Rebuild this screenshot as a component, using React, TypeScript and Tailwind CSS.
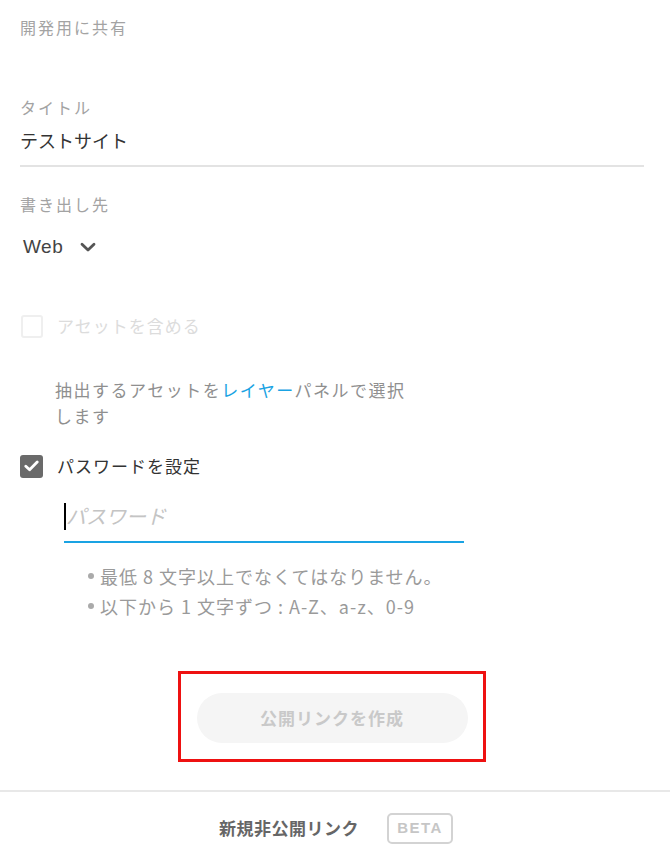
import React from "react";

const font = "font-['Hiragino_Sans','Noto_Sans_CJK_JP','Liberation_Sans',sans-serif]";

function Label({ children }: { children: React.ReactNode }) {
  return (
    <div className="text-[16px] leading-[24px] tracking-[2px] text-[#a3a3a3]">
      {children}
    </div>
  );
}

function CheckBox({ checked, disabled }: { checked?: boolean; disabled?: boolean }) {
  if (checked) {
    return (
      <span className="w-[23px] h-[23px] rounded-[3px] bg-[#6a6a6a] flex items-center justify-center shrink-0">
        <svg width="15" height="12" viewBox="0 0 15 12" fill="none">
          <path d="M1.8 6.2 L5.6 9.8 L13.2 2" stroke="white" strokeWidth="2.8" strokeLinecap="round" strokeLinejoin="round" />
        </svg>
      </span>
    );
  }
  return (
    <span
      className={
        "w-[22px] h-[23px] rounded-[3px] border-2 shrink-0 " +
        (disabled ? "border-[#efefef]" : "border-[#999]")
      }
    />
  );
}

export default function App() {
  return (
    <div className={`w-[670px] h-[852px] bg-white flex flex-col ${font}`}>
      <div className="pl-[20px] pr-[26px] pt-[15px] flex flex-col">
        {/* 開発用に共有 */}
        <Label>開発用に共有</Label>

        {/* タイトル */}
        <div className="mt-[56px]">
          <Label>タイトル</Label>
        </div>
        <div className="mt-[7px] text-[18px] leading-[28px] text-[#333]">テストサイト</div>
        <div className="mt-[11px] h-[2px] bg-[#e3e3e3]" />

        {/* 書き出し先 */}
        <div className="mt-[25px]">
          <Label>書き出し先</Label>
        </div>
        <button className="mt-[16px] h-[30px] flex items-center gap-[17px] pl-[3px] self-start">
          <span className="font-['Liberation_Sans',sans-serif] text-[19px] tracking-[0.5px] text-[#444]">Web</span>
          <svg width="16" height="11" viewBox="0 0 16 11" fill="none">
            <path d="M2 2.2 L8 8 L14 2.2" stroke="#555" strokeWidth="2.8" strokeLinecap="round" strokeLinejoin="round" />
          </svg>
        </button>

        {/* アセットを含める */}
        <div className="mt-[52px] h-[24px] flex items-center gap-[14px] pl-[1px]">
          <CheckBox disabled />
          <span className="text-[17px] tracking-[1px] text-[#dcdcdc]">アセットを含める</span>
        </div>

        <p className="mt-[39px] pl-[35px] text-[17px] leading-[26px] tracking-[1.5px] text-[#8f8f8f]">
          抽出するアセットを<span className="text-[#1aa3e3]">レイヤー</span>パネルで選択
          <br />
          します
        </p>

        {/* パスワードを設定 */}
        <div className="mt-[25px] h-[24px] flex items-center gap-[14px]">
          <CheckBox checked />
          <span className="text-[17px] tracking-[1px] text-[#333]">パスワードを設定</span>
        </div>

        <div className="mt-[18px] ml-[44px] w-[400px] relative">
          <input
            type="password"
            placeholder="パスワード"
            className="w-full h-[47px] pb-[6px] pl-[2px] border-b-2 border-[#1aa3e3] outline-none caret-transparent text-[20px] placeholder:italic placeholder:text-[#c4c4c4] bg-transparent"
          />
          <span className="absolute left-0 top-[7px] w-[2px] h-[27px] bg-black" />
        </div>

        <ul className="mt-[18px] pl-[68px] text-[18px] leading-[30px] tracking-[1px] text-[#9a9a9a]">
          <li className="flex items-center gap-[6px]">
            <span className="w-[6px] h-[6px] rounded-full bg-[#aaa]" />
            最低 8 文字以上でなくてはなりません。
          </li>
          <li className="flex items-center gap-[6px]">
            <span className="w-[6px] h-[6px] rounded-full bg-[#aaa]" />
            以下から 1 文字ずつ : A-Z、a-z、0-9
          </li>
        </ul>

        {/* 公開リンクを作成 */}
        <div className="mt-[50px] self-center w-[308px] h-[91px] border-[3px] border-[#ee1111] flex justify-center pt-[19px]">
          <button
            disabled
            className="w-[271px] h-[50px] rounded-full bg-[#f5f5f5] text-[17px] font-bold tracking-[1px] text-[#c9c9c9]"
          >
            公開リンクを作成
          </button>
        </div>
      </div>

      <div className="mt-[28px] h-[2px] bg-[#e8e8e8]" />

      {/* 新規非公開リンク */}
      <div className="flex-1 pt-[12px] flex items-center justify-center gap-[28px] pl-[2px]">
        <span className="text-[17px] font-bold tracking-[0.5px] text-[#666]">新規非公開リンク</span>
        <span className="w-[66px] h-[31px] border-2 border-[#d3d3d3] rounded-[5px] flex items-center justify-center font-['Liberation_Sans',sans-serif] text-[15px] font-bold tracking-[1.5px] text-[#c6c6c6]">
          BETA
        </span>
      </div>
    </div>
  );
}
